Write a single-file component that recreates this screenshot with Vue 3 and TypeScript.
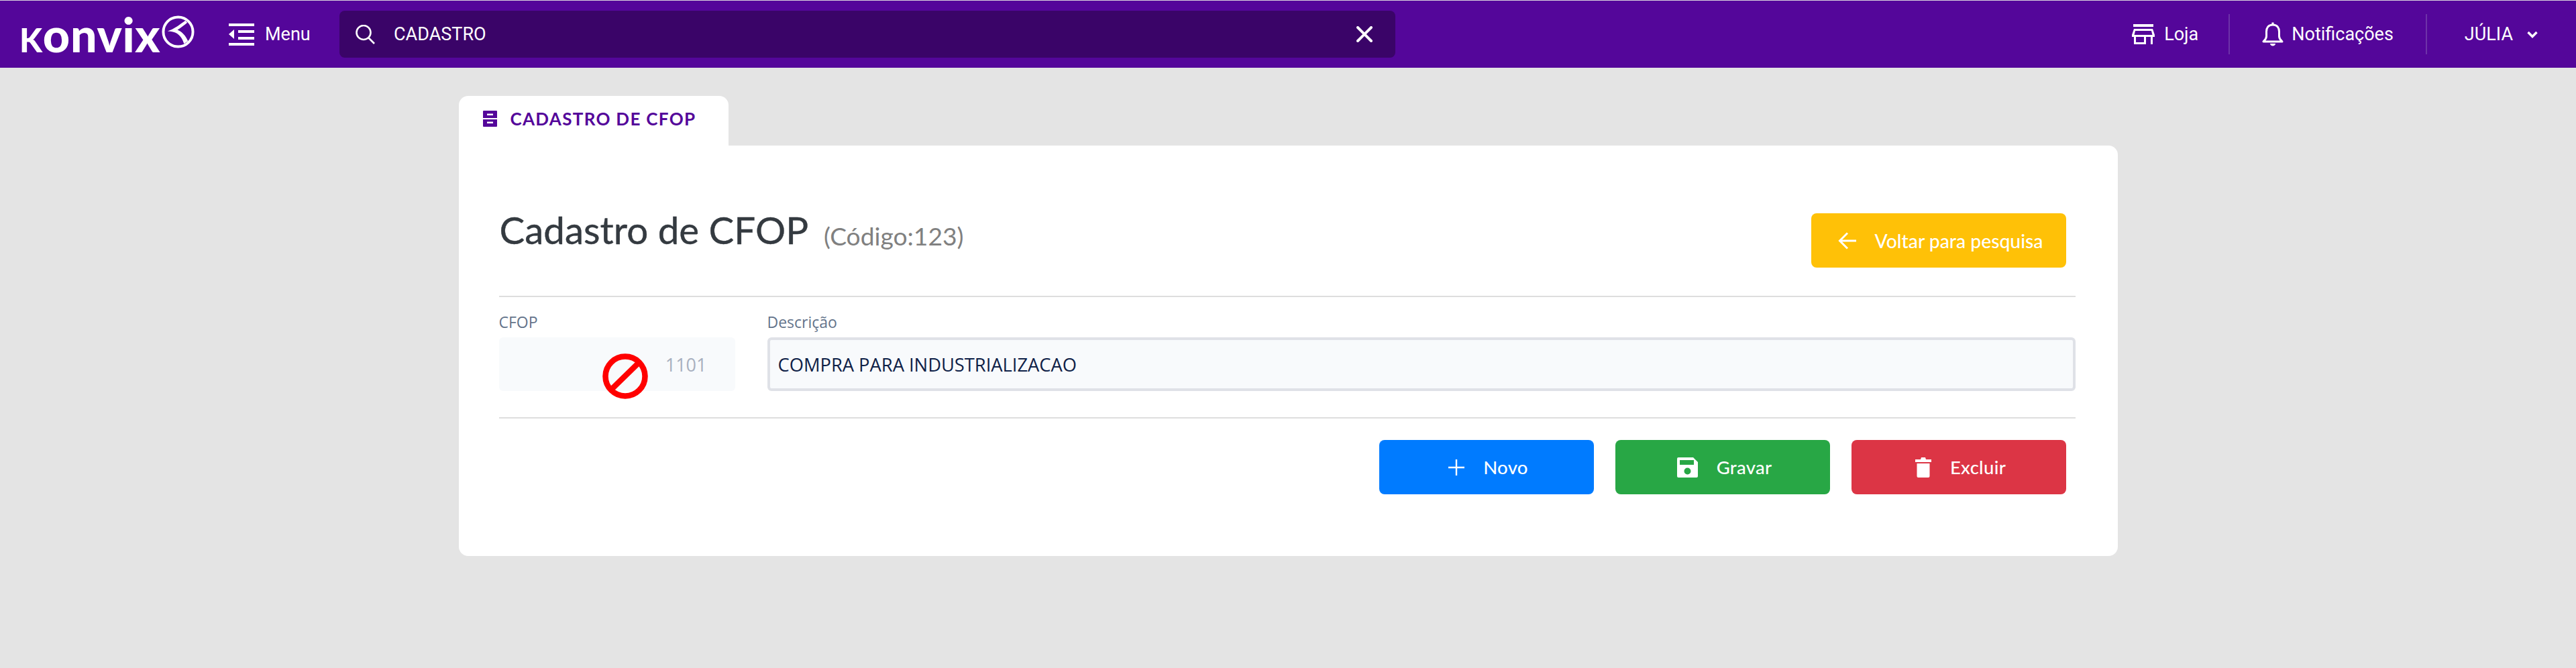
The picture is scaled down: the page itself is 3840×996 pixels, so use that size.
<script setup lang="ts">
interface Action {
  label: string;
  kind: 'novo' | 'gravar' | 'excluir';
}

const actions: Action[] = [
  { label: 'Novo', kind: 'novo' },
  { label: 'Gravar', kind: 'gravar' },
  { label: 'Excluir', kind: 'excluir' }
];
</script>

<template>
  <div class="page">
    <header class="topbar">
      <div class="logo">
        <span class="wordmark"><span class="k">k</span>onvix</span>
        <svg class="logo-mark" viewBox="0 0 50 50" fill="none">
          <circle cx="25" cy="25" r="22.5" stroke="#fff" stroke-width="4" />
          <path d="M36 8 C30 12 21 20 9 24 C22 24 30 30 34 43 L40 39 C36 30 31 25 24 22 C29 19 34 15 39 11 Z" fill="#fff" />
        </svg>
      </div>

      <button class="menu-btn" type="button">
        <svg class="menu-icon" viewBox="0 0 38 33" fill="#fff">
          <rect x="0" y="0" width="38" height="4" />
          <rect x="14" y="10" width="24" height="4" />
          <rect x="14" y="20" width="24" height="4" />
          <rect x="0" y="29" width="38" height="4" />
          <path d="M8 9 V23 L0 16 Z" />
        </svg>
        <span>Menu</span>
      </button>

      <div class="search">
        <svg class="search-icon" viewBox="0 0 29 29" fill="none" stroke="#fff" stroke-width="2.6">
          <circle cx="12" cy="11.5" r="10.5" />
          <path d="M19.5 19.5 L28 28" />
        </svg>
        <span class="search-text">CADASTRO</span>
        <svg class="clear-icon" viewBox="0 0 24 24" fill="none" stroke="#fff" stroke-width="4" stroke-linecap="round">
          <path d="M2 2 L22 22 M22 2 L2 22" />
        </svg>
      </div>

      <nav class="top-actions">
        <div class="top-item store">
          <svg class="store-icon" viewBox="0 0 34 30" fill="#fff">
            <rect x="2" y="0" width="30" height="4" />
            <path d="M3 7 H31 L34 16 V19 H31 V30 H28 V19 H21 V30 H3 V19 H0 V16 Z M5 10 L3.5 16 H30.5 L29 10 Z M6 19 V27 H18 V19 Z" fill-rule="evenodd" />
          </svg>
          <span>Loja</span>
        </div>
        <div class="top-item bell">
          <svg class="bell-icon" viewBox="0 0 32 36" fill="none" stroke="#fff" stroke-width="3" stroke-linejoin="round">
            <path d="M16 4 C9 4 6.5 9 6.5 14 V21 C6.5 25 4 27 2 29 H30 C28 27 25.5 25 25.5 21 V14 C25.5 9 23 4 16 4 Z" />
            <path d="M16 0.5 V4" />
            <path d="M12 32 H20 C20 36.5 12 36.5 12 32 Z" fill="#fff" stroke="none" />
          </svg>
          <span>Notificações</span>
        </div>
        <div class="top-item user">
          <span>JÚLIA</span>
          <svg class="chevron" viewBox="0 0 16 11" fill="none" stroke="#fff" stroke-width="3.4">
            <path d="M1.5 2 L8 8.5 L14.5 2" />
          </svg>
        </div>
      </nav>
    </header>

    <main class="content">
      <div class="tab">
        <svg class="tab-icon" viewBox="0 0 21 24">
          <path d="M1 0 H20 A1 1 0 0 1 21 1 V11 H0 V1 A1 1 0 0 1 1 0 Z M0 13 H21 V23 A1 1 0 0 1 20 24 H1 A1 1 0 0 1 0 23 Z M6 4.5 V7 H15 V4.5 Z M6 16.5 V19 H15 V16.5 Z" fill="#54069a" fill-rule="evenodd" />
        </svg>
        <span>CADASTRO DE CFOP</span>
      </div>

      <section class="card">
        <div class="title-row">
          <h1 class="title">Cadastro de CFOP <small class="code">(Código:123)</small></h1>
          <button class="btn btn-back" type="button">
            <svg class="back-icon" viewBox="0 0 27 26" fill="none" stroke="#fff" stroke-width="3">
              <path d="M27 13 H3 M14 1.5 L2.5 13 L14 24.5" />
            </svg>
            <span>Voltar para pesquisa</span>
          </button>
        </div>

        <div class="form-row">
          <div class="field">
            <label class="field-label">CFOP</label>
            <div class="input input-disabled">1101</div>
            <svg class="blocked" viewBox="0 0 68 68" fill="none" stroke="#f00" stroke-width="8.5">
              <circle cx="34" cy="34" r="29.5" />
              <path d="M14 53 L54 14" />
            </svg>
          </div>
          <div class="field">
            <label class="field-label">Descrição</label>
            <div class="input input-text">COMPRA PARA INDUSTRIALIZACAO</div>
          </div>
        </div>

        <div class="actions">
          <button v-for="a in actions" :key="a.kind" class="btn" :class="`btn-${a.kind}`" type="button">
            <svg v-if="a.kind === 'novo'" class="act-icon" viewBox="0 0 24 24" fill="none" stroke="#fff" stroke-width="2.4">
              <path d="M12 0 V24 M0 12 H24" />
            </svg>
            <svg v-else-if="a.kind === 'gravar'" class="act-icon save" viewBox="0 0 31 30">
              <path d="M2 0 H24 L31 7 V28 A2 2 0 0 1 29 30 H2 A2 2 0 0 1 0 28 V2 A2 2 0 0 1 2 0 Z M4 4 V11 H25 V4 Z M15.5 15.5 A5 5 0 1 0 15.5 25.5 A5 5 0 1 0 15.5 15.5 Z" fill="#fff" fill-rule="evenodd" />
            </svg>
            <svg v-else class="act-icon trash" viewBox="0 0 24 30" fill="#fff">
              <path d="M0 3 H8 L9 0 H15 L16 3 H24 V7 H0 Z" />
              <path d="M2.5 9 H21.5 V28 A2 2 0 0 1 19.5 30 H4.5 A2 2 0 0 1 2.5 28 Z" />
            </svg>
            <span>{{ a.label }}</span>
          </button>
        </div>
      </section>
    </main>
  </div>
</template>

<style>
html,
body {
  margin: 0;
  background: #e4e4e4;
}
</style>

<style scoped>
.page {
  min-height: 996px;
  background: #e4e4e4;
  font-family: Roboto, sans-serif;
}

.topbar {
  display: flex;
  align-items: center;
  height: 100px;
  border-top: 1px solid #d9d4de;
  background: #54069a;
  color: #fff;
  font-size: 27px;
}

.logo {
  display: flex;
  align-items: flex-start;
  width: 341px;
  height: 60px;
  padding-left: 29px;
  box-sizing: border-box;
  flex: none;
}

.wordmark {
  width: 212px;
  font-family: Lato, sans-serif;
  font-weight: 900;
  font-size: 70px;
  line-height: 60px;
  letter-spacing: 0.7px;
  flex: none;
}

.k {
  font-variant: small-caps;
}

.logo-mark {
  width: 49px;
  height: 49px;
  margin-top: 2px;
  flex: none;
}

.menu-btn {
  display: flex;
  align-items: center;
  gap: 16px;
  width: 165px;
  padding: 0;
  border: 0;
  background: none;
  color: inherit;
  font: inherit;
  flex: none;
}

.menu-icon {
  width: 38px;
  height: 33px;
}

.search {
  display: flex;
  align-items: center;
  width: 1574px;
  height: 70px;
  padding: 0 34px 0 24px;
  box-sizing: border-box;
  border-radius: 8px;
  background: #3a0468;
  flex: none;
}

.search-icon {
  width: 29px;
  height: 29px;
  margin-right: 28px;
}

.search-text {
  flex: 1;
}

.clear-icon {
  width: 24px;
  height: 24px;
}

.top-actions {
  display: flex;
  align-items: center;
  margin-left: auto;
}

.top-item {
  display: flex;
  align-items: center;
  height: 60px;
}

.store {
  gap: 14px;
  padding-right: 45px;
  border-right: 2px solid #6d32a8;
}

.store-icon {
  width: 34px;
  height: 30px;
}

.bell {
  gap: 12px;
  padding: 0 48px;
  border-right: 2px solid #6d32a8;
}

.bell-icon {
  width: 32px;
  height: 36px;
}

.user {
  gap: 21px;
  padding: 0 57px 0 56px;
}

.chevron {
  width: 16px;
  height: 11px;
}

.content {
  width: 2473px;
  margin: 0 auto;
  padding-top: 42px;
}

.tab {
  display: flex;
  align-items: center;
  gap: 20px;
  width: 402px;
  height: 74px;
  padding: 0 0 6px 36px;
  box-sizing: border-box;
  border-radius: 14px 14px 0 0;
  background: #fff;
  color: #54069a;
  font-family: Lato, sans-serif;
  font-weight: 700;
  font-size: 26px;
  letter-spacing: 1.3px;
}

.tab-icon {
  width: 21px;
  height: 24px;
}

.card {
  padding: 101px 63px 92px 60px;
  border-radius: 0 14px 14px 14px;
  background: #fff;
}

.title-row {
  display: flex;
  justify-content: space-between;
  align-items: flex-start;
  padding-right: 14px;
  padding-bottom: 42px;
  border-bottom: 2px solid #dedede;
}

.title {
  margin: 0 0 0 1px;
  font-family: Lato, sans-serif;
  font-weight: 400;
  font-size: 56.5px;
  line-height: 48px;
  color: #343a40;
  -webkit-text-stroke: 0.4px #343a40;
}

.code {
  margin-left: 10px;
  font-size: 37.2px;
  color: #808080;
  vertical-align: -2px;
  -webkit-text-stroke: 0;
}

.btn {
  display: flex;
  align-items: center;
  justify-content: center;
  gap: 28px;
  height: 81px;
  padding: 0 0 0 6px;
  border: 0;
  border-radius: 8px;
  color: #fff;
  font-family: Lato, sans-serif;
  font-size: 27.5px;
  font-weight: 500;
  letter-spacing: 0.3px;
}

.btn-back {
  width: 380px;
  background: #ffc107;
  font-size: 28.3px;
  letter-spacing: 0;
}

.back-icon {
  width: 27px;
  height: 26px;
}

.form-row {
  display: grid;
  grid-template-columns: 352px 1fr;
  gap: 48px;
  padding-top: 21px;
  padding-bottom: 39px;
  border-bottom: 2px solid #dedede;
}

.field {
  position: relative;
}

.field-label {
  display: block;
  height: 39px;
  font-family: "Open Sans", sans-serif;
  font-size: 23px;
  line-height: 32px;
  color: #64748b;
}

.input {
  display: flex;
  align-items: center;
  height: 80px;
  box-sizing: border-box;
  border-radius: 6px;
  background: #f8fafc;
  font-family: "Open Sans", sans-serif;
  font-size: 27px;
}

.input-disabled {
  justify-content: flex-end;
  padding: 0 42px 0 0;
  color: #a8b0bf;
}

.input-text {
  padding: 0 12px;
  border: 4px solid #dfe1e7;
  color: #0f2147;
  font-size: 27.3px;
}

.blocked {
  position: absolute;
  left: 154px;
  top: 63px;
  width: 68px;
  height: 68px;
}

.actions {
  display: flex;
  justify-content: flex-end;
  gap: 32px;
  padding: 32px 14px 0 0;
}

.actions .btn {
  width: 320px;
}

.btn-novo {
  background: #007bff;
}

.btn-gravar {
  background: #28a745;
}

.btn-excluir {
  background: #dc3545;
}

.act-icon {
  width: 24px;
  height: 24px;
}

.save {
  width: 31px;
  height: 30px;
}

.trash {
  width: 24px;
  height: 30px;
}
</style>
